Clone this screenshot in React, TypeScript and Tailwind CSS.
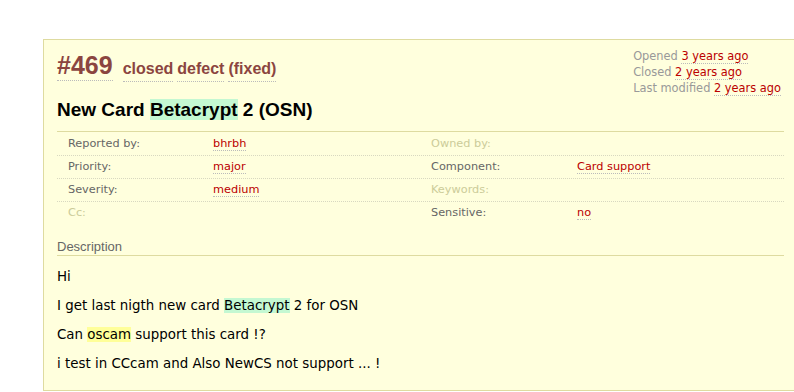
const verdana = "font-['DejaVu_Sans','Liberation_Sans',sans-serif]";
const arial = "font-['Liberation_Sans',Arial,sans-serif]";

function Lnk({ children }: { children: React.ReactNode }) {
  return <span className="text-[#b00] border-b border-dotted border-[#bbb]">{children}</span>;
}

type Cell = { label: string; value?: string; missing?: boolean };

const rows: [Cell, Cell][] = [
  [{ label: "Reported by:", value: "bhrbh" }, { label: "Owned by:", missing: true }],
  [{ label: "Priority:", value: "major" }, { label: "Component:", value: "Card support" }],
  [{ label: "Severity:", value: "medium" }, { label: "Keywords:", missing: true }],
  [{ label: "Cc:", missing: true }, { label: "Sensitive:", value: "no" }],
];

export default function App() {
  return (
    <div className="w-[794px] h-[392px] overflow-hidden bg-white pt-[39px] pl-[43px]">
      <div className="w-[755px] h-[352px] border border-[#dedba0] bg-[#ffffdd] px-[13px]">
        {/* header */}
        <div className="flex justify-between">
          <div className={`${arial} flex items-baseline gap-[10px] pt-[10px]`}>
            <span className="text-[25px] font-bold text-[#8b4540] border-b border-dotted border-[#bbb] leading-[30px]">#469</span>
            <span className="text-[16px] font-bold text-[#8b4540] flex gap-[4px]">
              <span className="border-b border-dotted border-[#bbb]">closed</span>
              <span className="border-b border-dotted border-[#bbb]">defect</span>
              <span className="border-b border-dotted border-[#bbb]">(fixed)</span>
            </span>
          </div>
          <div className={`${verdana} text-[11.4px] leading-[16px] text-[#999] pt-[8px] pr-[3px]`}>
            <div>Opened <Lnk>3 years ago</Lnk></div>
            <div>Closed <Lnk>2 years ago</Lnk></div>
            <div>Last modified <Lnk>2 years ago</Lnk></div>
          </div>
        </div>

        <h1 className={`${arial} text-[19px] font-bold text-black leading-[22px] mt-[3px]`}>
          New Card <span className="bg-[#c4f8d2]">Betacrypt</span> 2 (OSN)
        </h1>

        {/* properties */}
        <div className={`${verdana} text-[11.3px] mt-[10px] border-t border-[#dedba0]`}>
          {rows.map((r, i) => (
            <div
              key={i}
              className={`grid grid-cols-[156px_218px_146px_1fr] h-[23px] items-center pt-[1px] ${i > 0 ? "border-t border-dotted border-[#d8d8c0]" : ""}`}
            >
              {r.map((c, j) => (
                <>
                  <div key={`l${j}`} className={`${j === 0 ? "pl-[11px]" : ""} ${c.missing ? "text-[#cccc99]" : "text-[#666]"}`}>
                    {c.label}
                  </div>
                  <div key={`v${j}`}>{c.value ? <Lnk>{c.value}</Lnk> : null}</div>
                </>
              ))}
            </div>
          ))}
        </div>

        {/* description */}
        <h3 className={`${arial} text-[13px] text-[#666] leading-[16px] mt-[15px] border-b border-[#dedba0]`}>
          Description
        </h3>
        <div className={`${verdana} text-[13.4px] text-black leading-[16px] mt-[13px] flex flex-col gap-[13px]`}>
          <p>Hi</p>
          <p>
            I get last nigth new card <span className="bg-[#c4f8d2]">Betacrypt</span> 2 for OSN
          </p>
          <p>
            Can <span className="bg-[#ffff99]">oscam</span> support this card !?
          </p>
          <p>i test in CCcam and Also NewCS not support ... !</p>
        </div>
      </div>
    </div>
  );
}
